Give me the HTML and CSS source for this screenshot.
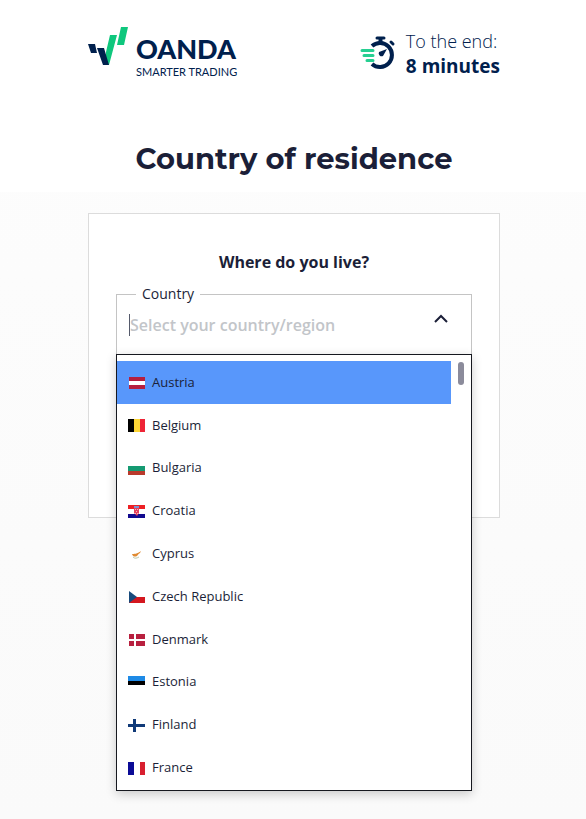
FILE: index.html
```html
<!DOCTYPE html>
<html lang="en">
<head>
    <meta charset="UTF-8">
    <meta name="viewport" content="width=device-width, initial-scale=1.0">
    <title>Country of residence | OANDA</title>
    <link rel="stylesheet" href="styles.css">
</head>
<body>
    <div class="top">
        <header class="header">
            <a class="logo" href="#" aria-label="OANDA Smarter Trading">
                <svg class="logo-mark" width="40" height="40" viewBox="0 0 40 40" aria-hidden="true">
                    <path fill="#0fc77d" d="M22 9h7l-8 30h-3V26zM33 1h7l-4 18h-7z"/>
                    <path fill="#00204d" d="M0 18h7l2 9H3zM9 22h7l5 17h-6z"/>
                </svg>
                <span class="logo-text">
                    <span class="logo-name">OANDA</span>
                    <span class="logo-tagline">SMARTER TRADING</span>
                </span>
            </a>
            <div class="timer">
                <svg class="timer-icon" width="36" height="36" viewBox="0 0 36 36" fill="none" aria-hidden="true">
                    <path stroke="#00204d" stroke-width="4" d="M12 11A12 12 0 1 1 12 29"/>
                    <path stroke="#00204d" stroke-width="3" stroke-linecap="round" d="M17 3h7M31 7l2 2"/>
                    <path stroke="#00204d" stroke-width="4" d="M20.500 3v6"/>
                    <path fill="#00204d" d="M27 14l-4 7a3 3 0 0 1-4-4z"/>
                    <path stroke="#26cf91" stroke-width="3" stroke-linecap="round" d="M2 15.500h11M4 20.500h9M7 25.500h6"/>
                </svg>
                <div class="timer-text">
                    <span>To the end:</span>
                    <strong>8 minutes</strong>
                </div>
            </div>
        </header>
        <h1>Country of residence</h1>
    </div>

    <main class="content">
        <form class="card">
            <h2>Where do you live?</h2>
            <div class="select">
                <fieldset class="field">
                    <legend><label for="country">Country</label></legend>
                    <input type="text" id="country" placeholder="Select your country/region" role="combobox" aria-expanded="true" aria-controls="countryList" autocomplete="off">
                    <button type="button" class="toggle" aria-label="Close the list">
                        <svg width="16" height="10" viewBox="0 0 16 10" fill="none" stroke="#1b1f38" stroke-width="2">
                            <path d="M2 8l6-6 6 6"/>
                        </svg>
                    </button>
                </fieldset>
                <div class="dropdown">
                    <ul class="list" id="countryList" role="listbox" aria-label="Country">
                        <li class="option active" role="option" aria-selected="true">
                            <svg class="flag" viewBox="0 0 17 13"><path fill="#b61f3f" d="M1 1h16v12H1z"/><path fill="#fff" d="M1 5h16v4H1z"/></svg>Austria
                        </li>
                        <li class="option" role="option">
                            <svg class="flag" viewBox="0 0 17 13"><path d="M0 0h6v13H0z"/><path fill="#fcd535" d="M6 0h6v13H6z"/><path fill="#ee2436" d="M12 0h5v13h-5z"/></svg>Belgium
                        </li>
                        <li class="option" role="option">
                            <svg class="flag" viewBox="0 0 17 13"><path fill="#fff" d="M0 0h17v4H0z"/><path fill="#159a72" d="M0 4h17v5H0z"/><path fill="#b93a2c" d="M0 9h17v4H0z"/></svg>Bulgaria
                        </li>
                        <li class="option" role="option">
                            <svg class="flag" viewBox="0 0 17 13"><path fill="#ed2024" d="M0 0h17v4H0z"/><path fill="#fff" d="M0 4h17v5H0z"/><path fill="#120a8f" d="M0 9h17v4H0z"/><path fill="#e5405c" d="M6 3h5v5l-2 3-3-3z"/><path fill="#f7b4bf" d="M7 4h1v1H7zM9 4h1v1H9zM8 6h1v1H8zM7 8h1v1H7zM9 8h1v1H9z"/><path fill="#7a8fd0" d="M6 1h5v2H6z"/></svg>Croatia
                        </li>
                        <li class="option" role="option">
                            <svg class="flag" viewBox="0 0 17 13"><path fill="#e08a32" d="M4 6c2 0 5 0 9-3l-1 2c-2 1-2 2-3 3-2 1-4 1-5-2z"/><path stroke="#b5c4a5" fill="none" d="M5 9c2 2 4 1 6 0"/></svg>Cyprus
                        </li>
                        <li class="option" role="option">
                            <svg class="flag" viewBox="0 0 17 13"><path fill="#fff" d="M1 1h16v6H1z"/><path fill="#d4171f" d="M1 7h16v6H1z"/><path fill="#174a7c" d="M1 1l8 6-8 6z"/></svg>Czech Republic
                        </li>
                        <li class="option" role="option">
                            <svg class="flag" viewBox="0 0 17 13"><path fill="#b8203f" d="M1 1h5v5H1zM8 1h9v5H8zM1 8h5v5H1zM8 8h9v5H8z"/></svg>Denmark
                        </li>
                        <li class="option" role="option">
                            <svg class="flag" viewBox="0 0 17 13"><path fill="#1e8ae6" d="M0 0h17v5H0z"/><path d="M0 5h17v4H0z"/></svg>Estonia
                        </li>
                        <li class="option" role="option">
                            <svg class="flag" viewBox="0 0 17 13"><path fill="#103a78" d="M0 5h5V0h3v5h9v3H8v5H5V8H0z"/></svg>Finland
                        </li>
                        <li class="option" role="option">
                            <svg class="flag" viewBox="0 0 17 13"><path fill="#0b0b96" d="M0 0h6v13H0z"/><path fill="#d81f2f" d="M12 0h5v13h-5z"/></svg>France
                        </li>
                    </ul>
                    <div class="scrollbar"><div class="thumb"></div></div>
                </div>
            </div>
        </form>
    </main>
</body>
</html>
```
FILE: styles.css
```css
* {
    box-sizing: border-box;
}
body {
    margin: 0;
    min-height: 100vh;
    background: linear-gradient(#fdfdfd, #fafafa);
    color: #1b1f38;
    font-family: "Open Sans", sans-serif;
    font-size: 16px;
}
.top {
    padding: 26px 86px 13px 88px;
    background: #fff;
}
.header {
    display: flex;
    justify-content: space-between;
    align-items: flex-start;
    color: #00204d;
}
.logo {
    display: flex;
    gap: 8px;
    color: #00204d;
    text-decoration: none;
    font-family: Lato, sans-serif;
}
.logo-text {
    display: flex;
    flex-direction: column;
    padding-top: 6px;
}
.logo-name {
    font-size: 27px;
    font-weight: 900;
    line-height: 33px;
}
.logo-tagline {
    font-size: 11px;
    line-height: 14px;
}
.timer {
    display: flex;
    gap: 10px;
    padding-top: 3px;
}
.timer-icon {
    margin-top: 6px;
}
.timer-text {
    display: flex;
    flex-direction: column;
    font-size: 18px;
    font-weight: 300;
    line-height: 25px;
}
.timer-text strong {
    font-size: 19px;
    font-weight: 700;
}
h1 {
    margin: 60px 0 0;
    font-family: Montserrat, Inter, sans-serif;
    font-size: 29px;
    font-weight: 700;
    line-height: 40px;
    text-align: center;
    white-space: nowrap;
}
.content {
    padding: 21px 86px 0 88px;
}
.card {
    min-height: 305px;
    padding: 36px 27px;
    border: 1px solid #dcdcdc;
    background: #fff;
}
h2 {
    margin: 0 0 10px;
    font-size: 16px;
    font-weight: 700;
    line-height: 24px;
    text-align: center;
}
.select {
    position: relative;
}
.field {
    display: flex;
    align-items: center;
    height: 71px;
    margin: 0;
    padding: 0 20px 9px 12px;
    border: 1px solid #c4c4c4;
}
.field legend {
    margin-left: 7px;
    padding: 0 6px;
    font-size: 14px;
    line-height: 20px;
}
.field input {
    flex: 1;
    min-width: 0;
    height: 22px;
    padding: 0;
    border: 0;
    border-left: 1px solid #555a6b;
    outline: 0;
    background: none;
    color: inherit;
    font: 600 16px "Open Sans", sans-serif;
}
.field input::placeholder {
    color: #c2c5c9;
    opacity: 1;
}
.toggle {
    display: flex;
    padding: 2px 2px 14px;
    border: 0;
    background: none;
    cursor: pointer;
}
/* opens over the card and the page below it */
.dropdown {
    position: absolute;
    top: calc(100% - 1px);
    left: 0;
    right: 0;
    display: flex;
    height: 437px;
    padding: 6px 0 1px;
    border: 1px solid #16181f;
    background: #fff;
    box-shadow: 0 3px 10px rgba(0, 0, 0, 0.2);
}
.list {
    flex: 1;
    display: flex;
    flex-direction: column;
    margin: 0;
    padding: 0;
    list-style: none;
    font-size: 13px;
}
.option {
    flex: 1;
    display: flex;
    align-items: center;
    gap: 7px;
    padding: 0 0 1px 11px;
    cursor: pointer;
}
.option.active {
    background: #5897fb;
}
.flag {
    width: 17px;
    height: 13px;
    margin-top: 2px;
}
.scrollbar {
    width: 20px;
    padding: 1px 7px;
}
.thumb {
    height: 23px;
    border-radius: 3px;
    background: #8b8b9b;
}
```
